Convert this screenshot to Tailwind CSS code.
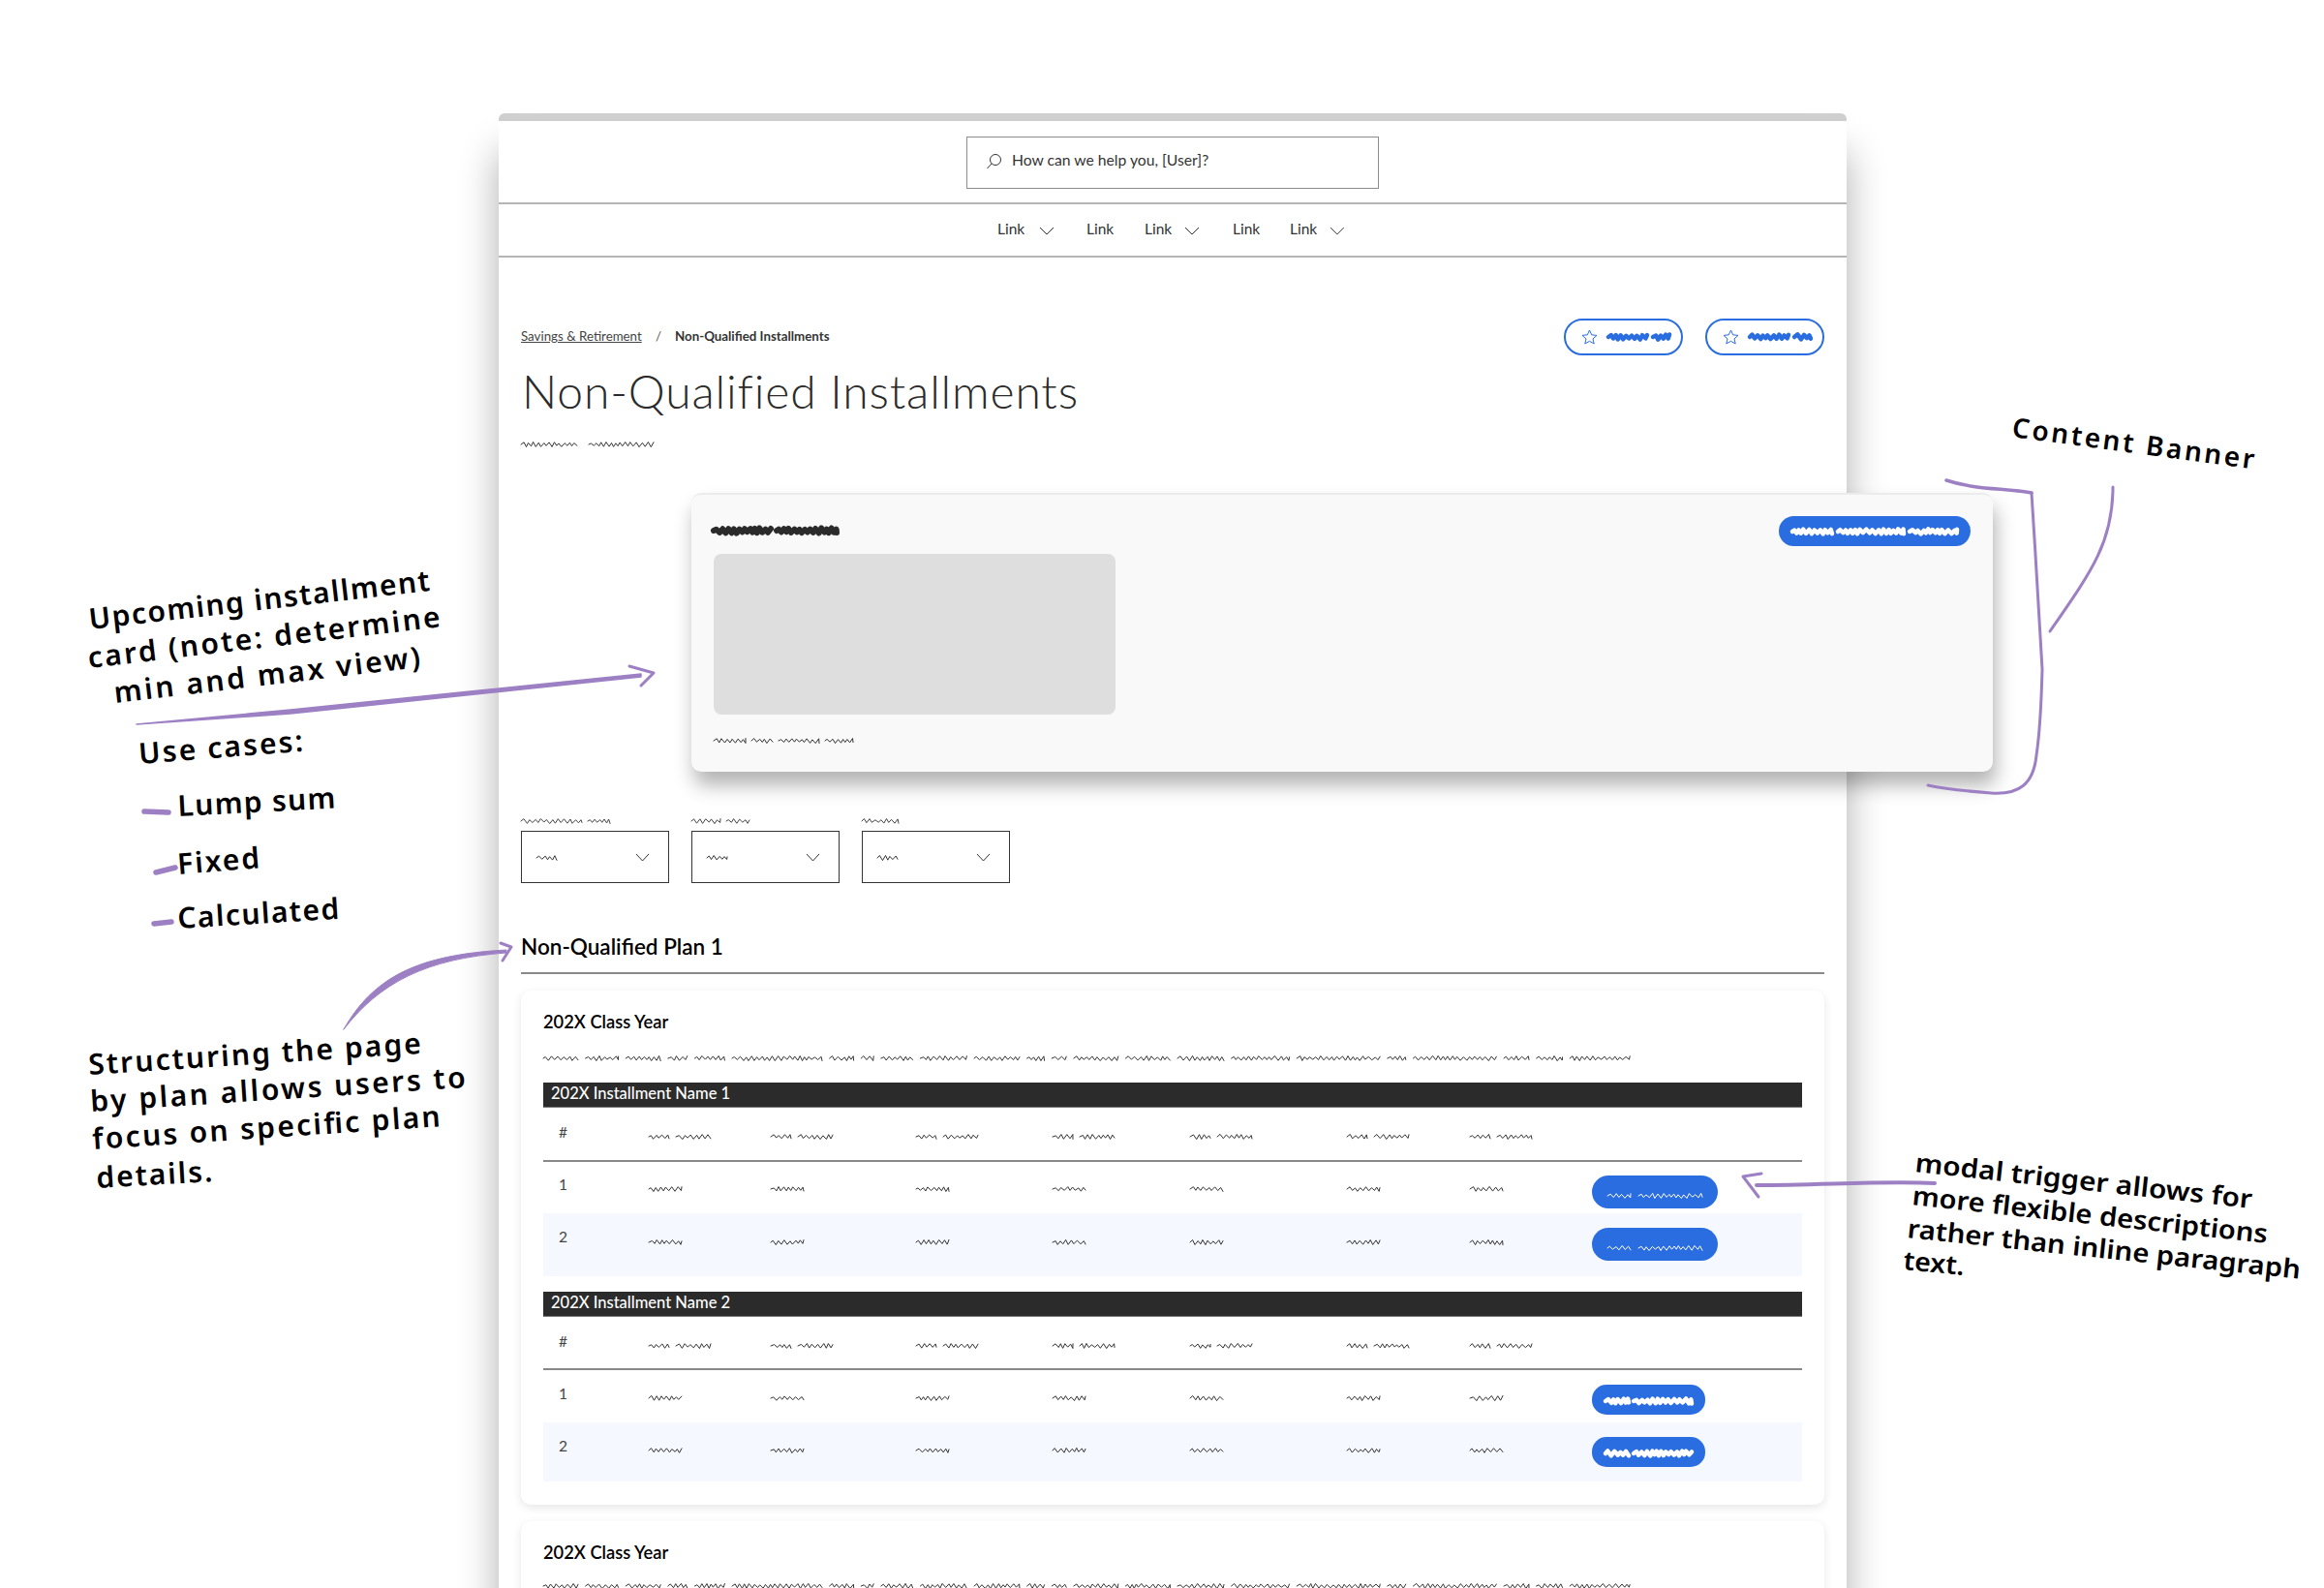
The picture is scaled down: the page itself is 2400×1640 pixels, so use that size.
<!DOCTYPE html>
<html lang="en">
<head>
    <meta charset="UTF-8">
    <meta name="viewport" content="width=device-width, initial-scale=1.0">
    <script src="https://cdn.jsdelivr.net/npm/@tailwindcss/browser@4"></script>
    <title>Non-Qualified Installments</title>
</head>
<body class="bg-white">
<div class="relative w-[2400px] h-[1640px] overflow-hidden bg-white font-['Lato',sans-serif] text-[#2b2b2b]">

    <!-- page frame -->
    <div class="ml-[515px] mt-[117px] w-[1392px] h-[1700px] absolute left-0 top-0 pt-[8px] bg-[#cfcfcf] rounded-t-[6px] shadow-[0_40px_40px_rgba(0,0,0,0.32)]">
        <div class="bg-white h-full">
            <div class="h-[86px] pt-[16px] border-b-2 border-[#b5b5b5] flex justify-center">
                <div class="w-[426px] h-[54px] border border-[#8c8c8c] flex items-center pb-[4px] pl-[19px] gap-[10px] text-[15.7px] text-[#333]">
                    <svg width="17" height="17" viewBox="0 0 17 17" fill="none" stroke="#333" stroke-width="1"><circle cx="10" cy="7" r="5.5"/><path d="M6 11 L1.5 16"/></svg>
                    <span>How can we help you, [User]?</span>
                </div>
            </div>

            <nav class="h-[55px] border-b-2 border-[#b5b5b5] flex items-center justify-center pb-[2px] text-[15.5px] text-[#333] pr-[3px]">
                <a class="w-[92px] flex items-center"><span class="w-[43px]">Link</span><svg width="16" height="9" viewBox="0 0 16 9" fill="none" stroke="#333" class="mt-[3px]"><path d="M1 1 L8 8 L15 1"/></svg></a>
                <a class="w-[60px]">Link</a>
                <a class="w-[91px] flex items-center"><span class="w-[41px]">Link</span><svg width="16" height="9" viewBox="0 0 16 9" fill="none" stroke="#333" class="mt-[3px]"><path d="M1 1 L8 8 L15 1"/></svg></a>
                <a class="w-[59px]">Link</a>
                <a class="w-[57px] flex items-center"><span class="w-[42px]">Link</span><svg width="16" height="9" viewBox="0 0 16 9" fill="none" stroke="#333" class="mt-[3px]"><path d="M1 1 L8 8 L15 1"/></svg></a>
            </nav>

            <main class="px-[23px]">
                <div class="mt-[63px] h-[38px] flex items-center justify-between">
                    <div class="flex items-center text-[13.3px]">
                        <a class="underline text-[#444] w-[139px]">Savings &amp; Retirement</a>
                        <span class="w-[20px] text-[#555]">/</span>
                        <span class="font-bold text-[#333]">Non-Qualified Installments</span>
                    </div>
                    <div class="flex gap-[23px]">
                        <button class="w-[123px] h-[38px] rounded-full border-2 border-[#2a6de0] flex items-center pl-[16px] gap-[11px] text-[#2a6de0]">
                            <svg width="17" height="16" viewBox="0 0 17 16" fill="none" stroke="currentColor" stroke-width="1"><path d="M8.5 1 L10.7 5.8 L16 6.4 L12 9.9 L13.2 15 L8.5 12.3 L3.8 15 L5 9.9 L1 6.4 L6.3 5.8 Z"/></svg>
                            <span data-sq="40 17" data-sw="4.5" data-gap="6"></span>
                        </button>
                        <button class="w-[123px] h-[38px] rounded-full border-2 border-[#2a6de0] flex items-center pl-[16px] gap-[11px] text-[#2a6de0]">
                            <svg width="17" height="16" viewBox="0 0 17 16" fill="none" stroke="currentColor" stroke-width="1"><path d="M8.5 1 L10.7 5.8 L16 6.4 L12 9.9 L13.2 15 L8.5 12.3 L3.8 15 L5 9.9 L1 6.4 L6.3 5.8 Z"/></svg>
                            <span data-sq="40 17" data-sw="4.5" data-gap="6"></span>
                        </button>
                    </div>
                </div>

                <h1 class="mt-[10px] h-[54px] leading-[54px] text-[48px] tracking-[0.85px] font-light text-[#2b2b2b] pl-[1px]">Non-Qualified Installments</h1>
                <div class="mt-[24px] text-[#333]" data-sq="58 67" data-gap="12"></div>

                <!-- content banner, wider than the page on purpose -->
                <section class="relative z-10 mt-[46px] ml-[176px] w-[1344px] h-[288px] rounded-[10px] bg-[#f9f9f9] border-t-2 border-[#ececec] shadow-[3px_14px_20px_rgba(0,0,0,0.3)] pl-[23px] pr-[23px] flex justify-between">
                    <div>
                        <div class="mt-[33px] text-[#2b2b2b]" data-sq="59 62" data-sw="6" data-gap="6"></div>
                        <div class="mt-[20px] w-[415px] h-[166px] rounded-[8px] bg-[#dedede]"></div>
                        <div class="mt-[23px] text-[#333]" data-sq="33 22 42 29" data-gap="6"></div>
                    </div>
                    <button class="mt-[22px] w-[198px] h-[31px] rounded-full bg-[#2a6de0] text-white flex items-center justify-center">
                        <span data-sq="41 68 49" data-sw="4.5" data-gap="6"></span>
                    </button>
                </section>

                <div class="mt-[47px] flex gap-[23px]">
                    <div class="w-[153px]">
                        <div class="text-[#444]" data-sq="63 23" data-gap="6"></div>
                        <div class="mt-[6px] h-[54px] border border-[#333] flex items-center justify-between pl-[15px] pr-[19px]">
                            <span class="text-[#333] mt-[2px]" data-sq="21"></span>
                            <svg width="15" height="9" viewBox="0 0 15 9" fill="none" stroke="#333"><path d="M1 1 L7.5 8 L14 1"/></svg>
                        </div>
                    </div>
                    <div class="w-[153px]">
                        <div class="text-[#444]" data-sq="30 24" data-gap="6"></div>
                        <div class="mt-[6px] h-[54px] border border-[#333] flex items-center justify-between pl-[15px] pr-[19px]">
                            <span class="text-[#333] mt-[2px]" data-sq="21"></span>
                            <svg width="15" height="9" viewBox="0 0 15 9" fill="none" stroke="#333"><path d="M1 1 L7.5 8 L14 1"/></svg>
                        </div>
                    </div>
                    <div class="w-[153px]">
                        <div class="text-[#444]" data-sq="38"></div>
                        <div class="mt-[6px] h-[54px] border border-[#333] flex items-center justify-between pl-[15px] pr-[19px]">
                            <span class="text-[#333] mt-[2px]" data-sq="21"></span>
                            <svg width="15" height="9" viewBox="0 0 15 9" fill="none" stroke="#333"><path d="M1 1 L7.5 8 L14 1"/></svg>
                        </div>
                    </div>
                </div>

                <h2 class="mt-[52px] h-[42px] pb-[12px] leading-[28px] text-[22.5px] font-semibold text-black border-b-2 border-[#8a8a8a]">Non-Qualified Plan 1</h2>

                <section class="mt-[17px] h-[531px] rounded-[10px] bg-white shadow-[0_3px_10px_rgba(0,0,0,0.10)] px-[23px] pt-[22px]">
                    <h3 class="h-[20px] leading-[20px] text-[18.3px] font-semibold text-black">202X Class Year</h3>
                    <div class="mt-[24px] text-[#333]" data-sq="36 34 36 20 31 93 25 13 33 48 47 18 15 46 46 48 60 86 19 86 26 27 62" data-gap="7.6"></div>
                    <div id="table1" class="mt-[21px]"></div>
                </section>

                <section class="mt-[17px] h-[300px] rounded-[10px] bg-white shadow-[0_3px_10px_rgba(0,0,0,0.10)] px-[23px] pt-[22px]">
                    <h3 class="h-[20px] leading-[20px] text-[18.3px] font-semibold text-black">202X Class Year</h3>
                    <div class="text-[#333] mt-[21px]" data-sq="36 34 36 20 31 93 25 13 33 48 47 18 15 46 46 48 60 86 19 86 26 27 62" data-gap="7.6"></div>
                </section>
            </main>
        </div>
    </div>

    <!-- handwritten notes on top of the page -->
    <svg class="absolute left-0 top-0 z-20 pointer-events-none" width="2400" height="1640" viewBox="0 0 2400 1640">
        <g fill="#000" class="font-['Noto_Sans',sans-serif] font-semibold">
            <text transform="translate(93 650) rotate(-6.5)" font-size="30" textLength="354">Upcoming installment</text>
            <text transform="translate(92 690) rotate(-6.7)" font-size="30" textLength="366">card (note: determine</text>
            <text transform="translate(119 726) rotate(-6.7)" font-size="30" textLength="318">min and max view)</text>
            <text transform="translate(144 789) rotate(-4.5)" font-size="30" textLength="170">Use cases:</text>
            <text transform="translate(184 843) rotate(-3)" font-size="30" textLength="163">Lump sum</text>
            <text transform="translate(184 903) rotate(-4.5)" font-size="30" textLength="85">Fixed</text>
            <text transform="translate(184 959) rotate(-3.5)" font-size="30" textLength="167">Calculated</text>
            <text transform="translate(92 1110) rotate(-3.7)" font-size="30" textLength="344">Structuring the page</text>
            <text transform="translate(94 1148) rotate(-3.7)" font-size="30" textLength="388">by plan allows users to</text>
            <text transform="translate(96 1187) rotate(-3.8)" font-size="30" textLength="360">focus on specific plan</text>
            <text transform="translate(100 1227) rotate(-3.3)" font-size="30" textLength="120">details.</text>
            <text transform="translate(2077 451) rotate(7.6)" font-size="28" textLength="252">Content Banner</text>
            <text transform="translate(1977 1210) rotate(6.2)" font-size="27" textLength="350" lengthAdjust="spacingAndGlyphs">modal trigger allows for</text>
            <text transform="translate(1974 1244) rotate(6.2)" font-size="27" textLength="369" lengthAdjust="spacingAndGlyphs">more flexible descriptions</text>
            <text transform="translate(1969 1278) rotate(6)" font-size="27" textLength="408" lengthAdjust="spacingAndGlyphs">rather than inline paragraph</text>
            <text transform="translate(1965 1311) rotate(5.4)" font-size="27" textLength="63" lengthAdjust="spacingAndGlyphs">text.</text>
        </g>
        <g fill="none" stroke="#9d80c4" stroke-linecap="round" stroke-linejoin="round">
            <path d="M141 748 L300 733 L662 696 L662 699 L300 737 Z" fill="#9d80c4" stroke-width="1.5"/>
            <path d="M650 688 L675 695 L662 708" stroke-width="3"/>
            <path d="M149 838 L174 839" stroke-width="5.5"/>
            <path d="M161 901 L181 896" stroke-width="5.5"/>
            <path d="M159 954 L177 952" stroke-width="5.5"/>
            <path d="M355 1063 C 385 1010, 430 986, 523 981 L 523 984 C 440 990, 392 1015, 355 1063 Z" fill="#9d80c4" stroke-width="1"/>
            <path d="M517 974 L528 978 L519 992" stroke-width="3"/>
            <path d="M2010 496 C 2040 506, 2070 504, 2098 509" stroke-width="3.5"/>
            <path d="M2098 509 C 2102 570, 2106 640, 2109 691 C 2108 730, 2106 760, 2103 780 C 2100 810, 2085 821, 2056 819 C 2030 817, 2010 815, 1991 811" stroke-width="3"/>
            <path d="M2182 503 C 2182 560, 2160 590, 2117 652" stroke-width="3"/>
            <path d="M1998 1222 C 1950 1219, 1880 1224, 1814 1224" stroke-width="4"/>
            <path d="M1819 1212 L1800 1215 L1816 1236" stroke-width="3"/>
        </g>
    </svg>
</div>

<script>
    // fake "greeked" copy from the wireframe, drawn as wavy lines
    var seed = 7;
    function rnd() {
        seed = (seed * 9301 + 49297) % 233280;
        return seed / 233280;
    }

    function squiggle(words, sw, gap) {
        var total = words.reduce((a, b) => a + b, 0) + gap * (words.length - 1);
        var h = 8, x = 0, d = "";
        words.forEach(w => {
            var px = x, up = true;
            d += "M" + px.toFixed(1) + " 4";
            while (px < x + w) {
                px += 2 + rnd() * 1.6;
                var py = 4 + (up ? -1 : 1) * (1.1 + rnd() * 1.5);
                d += "L" + Math.min(px, x + w).toFixed(1) + " " + py.toFixed(1);
                up = !up;
            }
            x += w + gap;
        });
        return `<svg class="block" width="${total}" height="${h}" viewBox="0 0 ${total} ${h}" style="overflow:visible" fill="none" stroke="currentColor" stroke-width="${sw}" stroke-linejoin="round" stroke-linecap="round"><path d="${d}"/></svg>`;
    }

    function fillSquiggles(root) {
        root.querySelectorAll("[data-sq]").forEach(el => {
            var words = el.dataset.sq.split(" ").map(Number);
            el.innerHTML = squiggle(words, parseFloat(el.dataset.sw || "1"), parseFloat(el.dataset.gap || "7"));
        });
    }

    var gridCols = "grid grid-cols-[109px_126px_150px_141px_142px_162px_127px_126px_1fr]";

    function row(num, h, numTop, sqTop, btnTop, btn, stripe) {
        var cells = "";
        for (let i = 0; i < 7; i++) {
            cells += `<div style="padding-top:${sqTop}px" class="text-[#333]"><div data-sq="${num === "#" ? "21 36" : "34"}"></div></div>`;
        }
        var btnHtml = "";
        if (btn === "thin") {
            btnHtml = `<button style="margin-top:${btnTop}px" class="w-[130px] h-[34px] rounded-[17px] bg-[#2a6de0] text-white flex justify-center items-center pt-[8px]"><span data-sq="24 66" data-sw="1" data-gap="8"></span></button>`;
        } else if (btn === "thick") {
            btnHtml = `<button style="margin-top:${btnTop}px" class="w-[117px] h-[31px] rounded-[15px] bg-[#2a6de0] text-white flex justify-center items-center pt-[2px]"><span data-sq="24 60" data-sw="4.5" data-gap="5"></span></button>`;
        }
        return `<div style="height:${h}px" class="${gridCols} ${stripe ? "bg-[#f5f8fe]" : ""} ${num === "#" ? "border-b-2 box-content border-[#888]" : ""}">
            <div style="padding-top:${numTop}px" class="pl-[16px] leading-[20px] text-[15.5px] text-[#444]">${num}</div>
            ${cells}
            <div>${btnHtml}</div>
        </div>`;
    }

    function table(title, btn, rows) {
        return `<div class="h-[26px] bg-[#2b2b2b] border-b border-[#777] text-white text-[16.5px] font-medium leading-[23px] pl-[8px]">${title}</div>` + rows.map(r => row(r[0], r[1], r[2], r[3], r[4], r[0] === "#" ? "" : btn, r[0] === "2")).join("");
    }

    document.getElementById("table1").innerHTML =
        table("202X Installment Name 1", "thin", [["#", 54, 15, 26, 0], ["1", 53, 13, 24, 14], ["2", 65, 14, 26, 15]]) +
        `<div class="h-[16px]"></div>` +
        table("202X Installment Name 2", "thick", [["#", 53, 15, 26, 0], ["1", 54, 14, 25, 15], ["2", 61, 14, 25, 15]]);

    fillSquiggles(document);
</script>
</body>
</html>
